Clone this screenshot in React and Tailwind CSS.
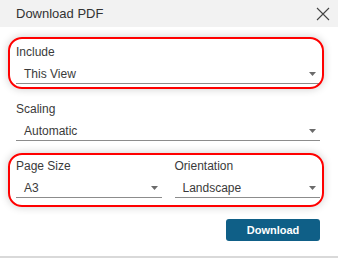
import React from 'react';

const font = { fontFamily: '"Liberation Sans", Arial, sans-serif' };

const Caret = () => (
  <svg width="7" height="4" viewBox="0 0 7 4" className="shrink-0">
    <path d="M0 0 L7 0 L3.5 4 Z" fill="#6b6b6b" />
  </svg>
);

// one select-like field: label on top, value with underline
const Field = ({ label, value, className = '' }) => (
  <div className={className}>
    <div className="h-4 leading-4 text-[12px] text-[#3a3a3a]">{label}</div>
    <div className="mt-[6px] flex items-center justify-between pl-2 pr-1 pb-[1px] border-b border-[#8c8c8c]">
      <span className="h-4 leading-4 text-[12px] text-[#3a3a3a]">{value}</span>
      <Caret />
    </div>
  </div>
);

const App = () => {
  return (
    <div className="w-[338px] h-[258px] bg-white flex flex-col overflow-hidden" style={font}>
      {/* Header */}
      <div className="h-[27px] bg-[#f2f2f2] flex items-center justify-between pl-4 pr-[8px] shrink-0">
        <span className="text-[13px] text-[#333]">Download PDF</span>
        <svg width="14" height="14" viewBox="0 0 14 14">
          <path d="M1 1 L13 13 M13 1 L1 13" stroke="#444" strokeWidth="1.1" />
        </svg>
      </div>

      {/* Body */}
      <div className="relative flex-1 pl-4 pr-[18px] pt-[17px]">
        <Field label="Include" value="This View" />
        <Field label="Scaling" value="Automatic" className="mt-[17px]" />
        <div className="mt-[17px] grid grid-cols-2 gap-[13px]">
          <Field label="Page Size" value="A3" />
          <Field label="Orientation" value="Landscape" />
        </div>
        <div className="mt-[21px] flex justify-end">
          <button className="w-[94px] h-[22px] rounded-[3px] bg-[#0f5f87] text-white text-[11px] font-bold">
            Download
          </button>
        </div>

        {/* annotation ovals */}
        <div className="absolute left-2 top-[10px] w-[316px] h-[52px] rounded-[14px] border-2 border-[#f00] shadow-[0_0_8px_rgba(0,0,0,0.2)] pointer-events-none" />
        <div className="absolute left-2 top-[126px] w-[316px] h-[54px] rounded-[14px] border-2 border-[#f00] shadow-[0_0_8px_rgba(0,0,0,0.2)] pointer-events-none" />
      </div>

      <div className="h-[2px] bg-[#d9d9d9] shrink-0" />
    </div>
  );
};

export default App;
